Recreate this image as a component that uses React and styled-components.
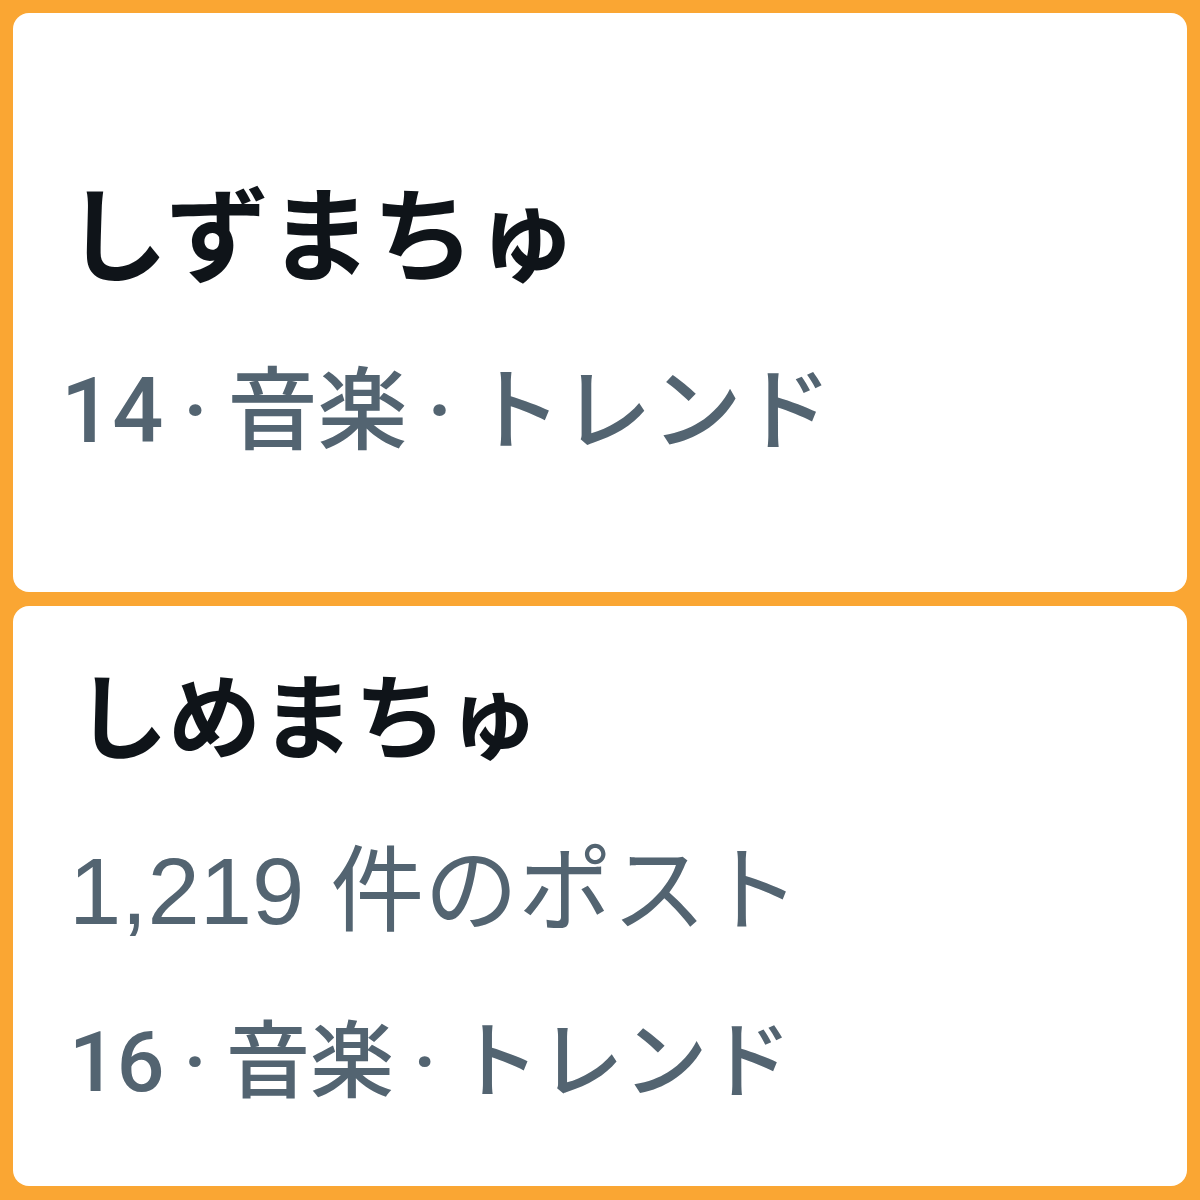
import React from "react";
import styled, { createGlobalStyle } from "styled-components";

const Global = createGlobalStyle`
  html, body { margin: 0; padding: 0; background: #FAA633; }
  * { box-sizing: border-box; }
`;

const Page = styled.div`
  width: 1200px;
  height: 1200px;
  background: #FAA633;
  padding: 13px 13px 14px;
  display: flex;
  flex-direction: column;
  gap: 14px;
`;

const Card = styled.div`
  background: #ffffff;
  border-radius: 16px;
  height: ${(p) => p.$h}px;
  display: flex;
  flex-direction: column;
  padding-left: ${(p) => p.$pl}px;
`;

const Title = styled.div`
  font-family: "Noto Sans CJK JP", sans-serif;
  font-weight: 700;
  color: #0f1419;
  font-size: ${(p) => p.$size}px;
  line-height: 1;
  white-space: nowrap;
  margin-top: ${(p) => p.$mt || 0}px;
  margin-left: ${(p) => p.$ml || 0}px;
`;

const Meta = styled.div`
  font-family: ${(p) => (p.$trend ? '"Roboto", "Noto Sans CJK JP", sans-serif' : '"Liberation Sans", "Noto Sans CJK JP", sans-serif')};
  font-weight: ${(p) => (p.$trend ? 500 : 400)};
  color: #536471;
  font-size: ${(p) => p.$size}px;
  line-height: 1;
  white-space: nowrap;
  margin-top: ${(p) => p.$mt || 0}px;
  margin-left: ${(p) => p.$ml || 0}px;
  word-spacing: ${(p) => p.$ws || 0}px;
`;

export default function App() {
  return (
    <>
      <Global />
      <Page>
        <Card $h={579} $pl={48}>
          <Title $size={103} $mt={165} $ml={4}>しずまちゅ</Title>
          <Meta $trend $size={90} $mt={86} $ws={-3}>14 · 音楽 · トレンド</Meta>
        </Card>
        <Card $h={580} $pl={56}>
          <Title $size={93} $mt={59} $ml={6}>しめまちゅ</Title>
          <Meta $size={94} $mt={87}>1,219 件のポスト</Meta>
          <Meta $trend $size={84} $mt={82} $ws={-2}>16 · 音楽 · トレンド</Meta>
        </Card>
      </Page>
    </>
  );
}
